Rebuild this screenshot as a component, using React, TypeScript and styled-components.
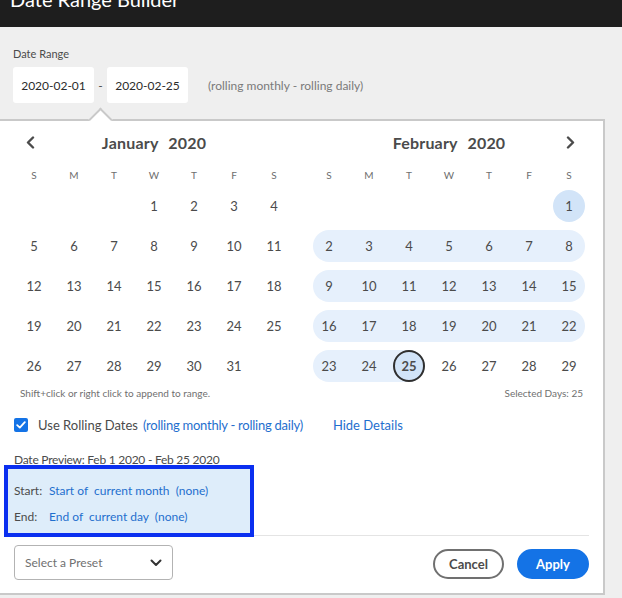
import React from "react";
import styled, { createGlobalStyle } from "styled-components";

const Global = createGlobalStyle`
  html, body { margin: 0; padding: 0; background: #efefef; }
  body { font-family: "Lato", "Open Sans", sans-serif; color: #4b4b4b; }
  * { box-sizing: border-box; }
`;

const Page = styled.div`
  width: 622px;
  height: 598px;
  overflow: hidden;
  background: #efefef;
`;

const TopBar = styled.div`
  height: 27px;
  background: #1e1e1e;
  overflow: hidden;
  padding-left: 10px;
`;

const Title = styled.div`
  margin-top: -11px;
  font-size: 20px;
  line-height: 20px;
  color: #ffffff;
`;

const Body = styled.div`
  padding-top: 20px;
`;

const Label = styled.div`
  margin-left: 13px;
  font-size: 11px;
  line-height: 14px;
  color: #4b4b4b;
`;

const RangeRow = styled.div`
  display: flex;
  align-items: center;
  margin-top: 6px;
  padding-left: 13px;
`;

const DateInput = styled.div`
  width: 81px;
  height: 36px;
  background: #ffffff;
  border-radius: 3px;
  display: flex;
  align-items: center;
  justify-content: center;
  font-size: 12px;
  color: #2c2c2c;
`;

const Dash = styled.div`
  width: 13px;
  text-align: center;
  font-size: 12px;
  color: #4b4b4b;
`;

const RollingNote = styled.div`
  margin-left: 20px;
  font-size: 12px;
  color: #7a7a7a;
`;

const Popover = styled.div`
  position: relative;
  margin-top: 16px;
  width: 605px;
  height: 476px;
  background: #ffffff;
  border-top: 2px solid #c9c9c9;
  border-right: 2px solid #c9c9c9;
  border-bottom: 2px solid #c9c9c9;
  padding: 0 14px;
  &::before {
    content: "";
    position: absolute;
    left: 92px;
    top: -10px;
    width: 15px;
    height: 15px;
    background: #ffffff;
    border-top: 2px solid #c9c9c9;
    border-left: 2px solid #c9c9c9;
    transform: rotate(45deg);
  }
`;

const Months = styled.div`
  display: flex;
  gap: 15px;
`;

const Month = styled.div`
  width: 280px;
`;

const MonthHead = styled.div`
  height: 43px;
  display: grid;
  grid-template-columns: 40px 1fr 40px;
  align-items: center;
`;

const NavBtn = styled.div<{ $side: "left" | "right" }>`
  display: flex;
  justify-content: ${(p) => (p.$side === "left" ? "flex-start" : "flex-end")};
  padding: ${(p) => (p.$side === "left" ? "0 0 0 12px" : "0 14px 0 0")};
  color: #4b4b4b;
`;

const MonthTitle = styled.div`
  text-align: center;
  font-size: 16px;
  font-weight: 700;
  color: #4b4b4b;
  word-spacing: 6px;
  letter-spacing: 0.2px;
`;

const DowRow = styled.div`
  display: grid;
  grid-template-columns: repeat(7, 40px);
  height: 22px;
  align-items: center;
`;

const Dow = styled.div`
  text-align: center;
  font-size: 10px;
  color: #6e6e6e;
`;

const Grid = styled.div`
  display: grid;
  grid-template-columns: repeat(7, 40px);
  grid-auto-rows: 40px;
`;

const Cell = styled.div`
  display: grid;
  grid-template: 1fr / 1fr;
  align-items: center;
  justify-items: center;
  font-size: 13px;
  color: #4b4b4b;
  & > * { grid-area: 1 / 1; }
`;

const Band = styled.div<{ $l: boolean; $r: boolean; $strong: boolean }>`
  justify-self: stretch;
  height: 32px;
  background: ${(p) => (p.$strong ? "#d2e4f8" : "#e6f0fc")};
  margin-left: ${(p) => (p.$l ? "4px" : "0")};
  margin-right: ${(p) => (p.$r ? "4px" : "0")};
  border-radius: ${(p) => `${p.$l ? 16 : 0}px ${p.$r ? 16 : 0}px ${p.$r ? 16 : 0}px ${p.$l ? 16 : 0}px`};
`;

const EndCircle = styled.div`
  width: 32px;
  height: 32px;
  border-radius: 50%;
  border: 2px solid #2f2f2f;
  background: #d2e4f8;
`;

const Num = styled.span<{ $bold?: boolean }>`
  position: relative;
  font-weight: ${(p) => (p.$bold ? 700 : 400)};
`;

const HintRow = styled.div`
  height: 14px;
  display: flex;
  justify-content: space-between;
  align-items: center;
  padding: 0 6px;
  font-size: 10px;
  color: #707070;
`;

const CheckRow = styled.div`
  margin-top: 17px;
  height: 16px;
  display: flex;
  align-items: center;
  font-size: 13px;
`;

const Check = styled.div`
  width: 14px;
  height: 14px;
  border-radius: 2px;
  background: #1473e6;
  display: flex;
  align-items: center;
  justify-content: center;
  margin-right: 10px;
`;

const Link = styled.span<{ $ml?: number; $tight?: boolean }>`
  color: #1f6fce;
  margin-left: ${(p) => p.$ml ?? 0}px;
  white-space: pre;
  letter-spacing: ${(p) => (p.$tight ? "-0.25px" : "0")};
`;

const Preview = styled.div`
  margin-top: 19px;
  height: 16px;
  line-height: 16px;
  font-size: 12px;
  letter-spacing: -0.25px;
  color: #4b4b4b;
`;

const Details = styled.div`
  position: relative;
  z-index: 1;
  margin: -3px 0 0 -10px;
  width: 250px;
  border: 4px solid #0a2ff0;
  background: #deedfa;
  padding: 8px 0 4px 6px;
`;

const DetailRow = styled.div`
  height: 26px;
  display: flex;
  align-items: center;
  font-size: 12px;
  white-space: pre;
`;

const DetailKey = styled.span<{ $w: number }>`
  display: inline-block;
  width: ${(p) => p.$w}px;
  color: #4b4b4b;
`;

const Bottom = styled.div`
  margin-top: -2px;
  border-top: 1px solid #e4e4e4;
  padding-top: 9px;
  display: flex;
  align-items: center;
`;

const Select = styled.div`
  width: 159px;
  height: 35px;
  border: 1px solid #b3b3b3;
  border-radius: 4px;
  display: flex;
  align-items: center;
  justify-content: space-between;
  padding: 0 10px 0 10px;
  font-size: 12px;
  color: #707070;
`;

const Spacer = styled.div`
  flex: 1;
`;

const Button = styled.div<{ $primary?: boolean }>`
  height: 30px;
  margin-top: 3px;
  border-radius: 15px;
  display: flex;
  align-items: center;
  justify-content: center;
  font-size: 13px;
  font-weight: 700;
  border: 2px solid ${(p) => (p.$primary ? "#1473e6" : "#707070")};
  background: ${(p) => (p.$primary ? "#1473e6" : "#ffffff")};
  color: ${(p) => (p.$primary ? "#ffffff" : "#4b4b4b")};
  margin-left: ${(p) => (p.$primary ? "13px" : "0")};
  width: ${(p) => (p.$primary ? "72px" : "71px")};
`;

const DOW = ["S", "M", "T", "W", "T", "F", "S"];

const Chevron = ({ dir }: { dir: "left" | "right" | "down" }) => {
  if (dir === "down")
    return (
      <svg width="12" height="8" viewBox="0 0 12 8">
        <path d="M1.5 1.5 L6 6 L10.5 1.5" fill="none" stroke="#333" strokeWidth="2" strokeLinecap="round" strokeLinejoin="round" />
      </svg>
    );
  const d = dir === "left" ? "M7 1.5 L2 6.5 L7 11.5" : "M2 1.5 L7 6.5 L2 11.5";
  return (
    <svg width="9" height="13" viewBox="0 0 9 13">
      <path d={d} fill="none" stroke="#4b4b4b" strokeWidth="2.4" strokeLinecap="round" strokeLinejoin="round" />
    </svg>
  );
};

type MonthProps = {
  name: string;
  offset: number;
  days: number;
  range?: [number, number];
  nav: "left" | "right";
};

const MonthView = ({ name, offset, days, range, nav }: MonthProps) => {
  const cells: React.ReactNode[] = [];
  for (let i = 0; i < offset; i++) cells.push(<Cell key={`e${i}`} />);
  for (let d = 1; d <= days; d++) {
    const col = (offset + d - 1) % 7;
    const inRange = range ? d >= range[0] && d <= range[1] : false;
    const isStart = range ? d === range[0] : false;
    const isEnd = range ? d === range[1] : false;
    cells.push(
      <Cell key={d}>
        {inRange && (
          <Band $l={col === 0 || isStart} $r={col === 6 || isEnd} $strong={isStart} />
        )}
        {isEnd && <EndCircle />}
        <Num $bold={isEnd}>{d}</Num>
      </Cell>
    );
  }
  return (
    <Month>
      <MonthHead>
        <NavBtn $side="left">{nav === "left" && <Chevron dir="left" />}</NavBtn>
        <MonthTitle>{name}</MonthTitle>
        <NavBtn $side="right">{nav === "right" && <Chevron dir="right" />}</NavBtn>
      </MonthHead>
      <DowRow>
        {DOW.map((d, i) => (
          <Dow key={i}>{d}</Dow>
        ))}
      </DowRow>
      <Grid>{cells}</Grid>
    </Month>
  );
};

export default function App() {
  return (
    <Page>
      <Global />
      <TopBar>
        <Title>Date Range Builder</Title>
      </TopBar>
      <Body>
        <Label>Date Range</Label>
        <RangeRow>
          <DateInput>2020-02-01</DateInput>
          <Dash>-</Dash>
          <DateInput>2020-02-25</DateInput>
          <RollingNote>(rolling monthly - rolling daily)</RollingNote>
        </RangeRow>
        <Popover>
          <Months>
            <MonthView name="January 2020" offset={3} days={31} nav="left" />
            <MonthView name="February 2020" offset={6} days={29} range={[1, 25]} nav="right" />
          </Months>
          <HintRow>
            <span>Shift+click or right click to append to range.</span>
            <span>Selected Days: 25</span>
          </HintRow>
          <CheckRow>
            <Check>
              <svg width="10" height="8" viewBox="0 0 10 8">
                <path d="M1.2 4.2 L3.8 6.6 L8.8 1.2" fill="none" stroke="#fff" strokeWidth="1.8" strokeLinecap="round" strokeLinejoin="round" />
              </svg>
            </Check>
            <span>Use Rolling Dates</span>
            <Link $ml={5} $tight>(rolling monthly - rolling daily)</Link>
            <Link $ml={30}>Hide Details</Link>
          </CheckRow>
          <Preview>Date Preview: Feb 1 2020 - Feb 25 2020</Preview>
          <Details>
            <DetailRow>
              <DetailKey $w={35}>Start:</DetailKey>
              <Link>Start of  current month  (none)</Link>
            </DetailRow>
            <DetailRow>
              <DetailKey $w={35}>End:</DetailKey>
              <Link>End of  current day  (none)</Link>
            </DetailRow>
          </Details>
          <Bottom>
            <Select>
              <span>Select a Preset</span>
              <Chevron dir="down" />
            </Select>
            <Spacer />
            <Button>Cancel</Button>
            <Button $primary>Apply</Button>
          </Bottom>
        </Popover>
      </Body>
    </Page>
  );
}
